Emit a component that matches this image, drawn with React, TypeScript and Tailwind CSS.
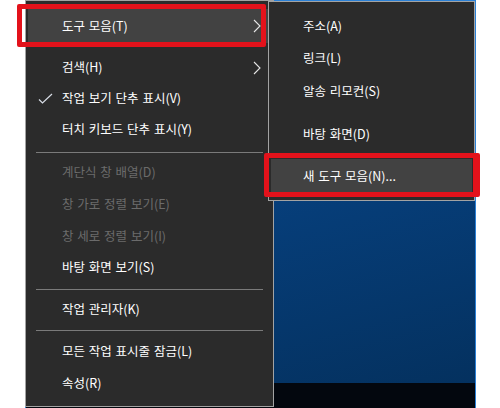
import { ReactNode } from "react";

function Chevron() {
  return (
    <svg width="8" height="14" viewBox="0 0 8 14" className="absolute right-[10px]">
      <path d="M1 1 L7 7 L1 13" fill="none" stroke="#e6e6e6" strokeWidth="1.1" />
    </svg>
  );
}

function Check() {
  return (
    <svg width="15" height="12" viewBox="0 0 15 12" className="absolute left-[10px]">
      <path d="M1 6.5 L4.5 10 L14 1" fill="none" stroke="#d8dde6" strokeWidth="1.2" />
    </svg>
  );
}

function Item({
  label,
  h = "h-[31px]",
  disabled = false,
  active = false,
  sub = false,
  checked = false,
}: {
  label: string;
  h?: string;
  disabled?: boolean;
  active?: boolean;
  sub?: boolean;
  checked?: boolean;
}) {
  return (
    <div
      className={`relative mx-[2px] flex items-center pl-[34px] ${h} ${
        active ? "bg-[#424242]" : ""
      } ${disabled ? "text-[#6b6b6b]" : "text-white"}`}
    >
      {checked && <Check />}
      <span>{label}</span>
      {sub && <Chevron />}
    </div>
  );
}

function Sep({ top, bottom }: { top: string; bottom: string }) {
  return (
    <div className={`${top} ${bottom} px-[10px]`}>
      <div className="h-px bg-[#7a7a7a]" />
    </div>
  );
}

function SubItem({ label, h, active = false }: { label: string; h: string; active?: boolean }): ReactNode {
  return (
    <div
      className={`mx-[2px] flex items-center pl-[32px] text-white ${h} ${
        active ? "bg-[#424242]" : ""
      }`}
    >
      {label}
    </div>
  );
}

export default function App() {
  return (
    <div className="relative w-[500px] h-[408px] overflow-hidden bg-white font-['Noto_Sans_CJK_KR','Malgun_Gothic',sans-serif] text-[12.5px] leading-none [word-spacing:1px]">
      {/* desktop */}
      <div className="relative ml-[25px] flex h-[408px] w-[451px] flex-col border-x border-t border-[#2a80d6]">
        <div className="flex-1 bg-[linear-gradient(165deg,#0b5196_0%,#074282_40%,#04315f_100%)]" />
        <div className="h-[25px] bg-[#03070e]" />

        {/* main context menu */}
        <div className="absolute left-[-1px] top-[-1px] h-[407px] w-[249px] border border-[#a3a3a3] bg-[#2b2b2b] pt-[8px]">
          <Item label="도구 모음(T)" h="h-[34px]" active sub />
          <div className="h-[9px]" />
          <Item label="검색(H)" sub />
          <Item label="작업 보기 단추 표시(V)" checked />
          <Item label="터치 키보드 단추 표시(Y)" />
          <Sep top="pt-[7px]" bottom="pb-[4px]" />
          <Item label="계단식 창 배열(D)" disabled />
          <Item label="창 가로 정렬 보기(E)" disabled h="h-[32px]" />
          <Item label="창 세로 정렬 보기(I)" disabled h="h-[32px]" />
          <Item label="바탕 화면 보기(S)" />
          <Sep top="pt-[6px]" bottom="pb-[4px]" />
          <Item label="작업 관리자(K)" />
          <Sep top="pt-[5px]" bottom="pb-[4px]" />
          <Item label="모든 작업 표시줄 잠금(L)" h="h-[32px]" />
          <Item label="속성(R)" h="h-[32px]" />
        </div>

        {/* toolbar submenu */}
        <div className="absolute left-[242px] top-0 h-[200px] w-[207px] border border-[#a3a3a3] bg-[#2b2b2b] pt-[8px]">
          <SubItem label="주소(A)" h="h-[32px]" />
          <SubItem label="링크(L)" h="h-[33px]" />
          <SubItem label="알송 리모컨(S)" h="h-[32px]" />
          <div className="h-[11px]" />
          <SubItem label="바탕 화면(D)" h="h-[32px]" />
          <div className="h-[9px]" />
          <SubItem label="새 도구 모음(N)..." h="h-[34px]" active />
        </div>
      </div>

      {/* annotation boxes */}
      <div className="absolute left-[17px] top-[4px] h-[43px] w-[249px] rounded-[2px] border-[5px] border-[#e3121b]" />
      <div className="absolute left-[264px] top-[153px] h-[44px] w-[216px] rounded-[2px] border-[5px] border-r-[7px] border-[#e3121b]" />
    </div>
  );
}
